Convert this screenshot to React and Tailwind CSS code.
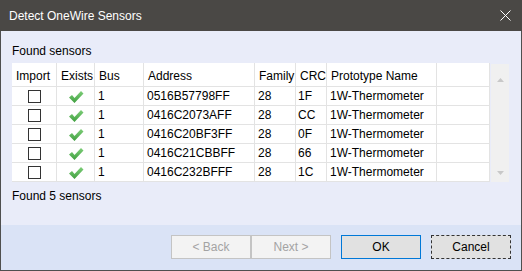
import React from "react";

const columns = ["Import", "Exists", "Bus", "Address", "Family", "CRC", "Prototype Name", ""];

const sensors = [
  { address: "0516B57798FF", family: "28", crc: "1F" },
  { address: "0416C2073AFF", family: "28", crc: "CC" },
  { address: "0416C20BF3FF", family: "28", crc: "0F" },
  { address: "0416C21CBBFF", family: "28", crc: "66" },
  { address: "0416C232BFFF", family: "28", crc: "1C" },
];

const Check = () => (
  <svg width="16" height="14" viewBox="0 0 16 14">
    <defs>
      <linearGradient id="chk" x1="0" y1="0" x2="0" y2="1">
        <stop offset="0" stopColor="#7fcf7a" />
        <stop offset="1" stopColor="#3f9f3f" />
      </linearGradient>
    </defs>
    <path d="M1 7.5 L4 5 L6.5 8 L13 1 L15.5 3.5 L6.5 13 Z" fill="url(#chk)" />
  </svg>
);

const Cell = ({ children, className = "" }) => (
  <div className={`border-r border-b border-[#e3e3e3] flex items-center overflow-hidden whitespace-nowrap ${className}`}>
    {children}
  </div>
);

export default function App() {
  return (
    <div
      className="w-[522px] h-[271px] flex flex-col text-[12px] text-black"
      style={{ fontFamily: '"Liberation Sans", Arial, sans-serif' }}
    >
      {/* Title bar */}
      <div className="h-[31px] bg-[#4a4845] flex items-center justify-between pl-[9px] pr-[11px] text-white">
        <span className="text-[12px]">Detect OneWire Sensors</span>
        <svg width="11" height="11" viewBox="0 0 11 11">
          <path d="M0.5 0.5 L10.5 10.5 M10.5 0.5 L0.5 10.5" stroke="#ffffff" strokeWidth="1" />
        </svg>
      </div>

      <div className="flex-1 flex flex-col border-x border-b border-[#4f4f4f]">
        {/* Content */}
        <div className="flex-1 bg-[#e9ecf9] pl-[11px] pr-[11px] pt-[12px]">
          <div className="h-[16px] leading-[16px]">Found sensors</div>
          <div className="mt-[4px] flex">
            <div className="grid grid-cols-[45px_38px_49px_111px_41px_31px_110px_53px] grid-rows-[24px_repeat(5,19px)] bg-white">
              {columns.map((c, i) => (
                <Cell key={i} className="pl-[4px] pt-[3px]">{c}</Cell>
              ))}
              {sensors.map((s, i) => (
                <React.Fragment key={i}>
                  <Cell className="justify-center">
                    <div className="w-[13px] h-[13px] border border-[#333333] bg-white" />
                  </Cell>
                  <Cell className="justify-center pt-[1px]">
                    <Check />
                  </Cell>
                  <Cell className="pl-[3px]">1</Cell>
                  <Cell className="pl-[3px]">{s.address}</Cell>
                  <Cell className="pl-[3px]">{s.family}</Cell>
                  <Cell className="pl-[2px]">{s.crc}</Cell>
                  <Cell className="pl-[3px]">1W-Thermometer</Cell>
                  <Cell />
                </React.Fragment>
              ))}
            </div>
            {/* Scrollbar */}
            <div className="ml-[1px] mt-[1px] w-[18px] bg-[#f0f0f0] flex flex-col items-center justify-between py-[14px] pb-[7px]">
              <svg width="7" height="4" viewBox="0 0 7 4">
                <path d="M0 4 L3.5 0 L7 4 Z" fill="#c8c8c8" />
              </svg>
              <svg width="7" height="4" viewBox="0 0 7 4">
                <path d="M0 0 L3.5 4 L7 0 Z" fill="#c8c8c8" />
              </svg>
            </div>
          </div>
          <div className="mt-[6px] h-[16px] leading-[16px]">Found 5 sensors</div>
        </div>

        {/* Buttons */}
        <div className="h-[45px] bg-[#dae3f6] flex justify-end items-start pt-[10px] pr-[10px]">
          <button className="w-[80px] h-[24px] bg-[#f3f3f3] border border-[#c4c4c4] text-[#a3a3a3]">
            &lt; Back
          </button>
          <button className="w-[80px] h-[24px] bg-[#f3f3f3] border border-[#c4c4c4] text-[#a3a3a3]">
            Next &gt;
          </button>
          <button className="ml-[10px] w-[80px] h-[24px] bg-[#e1e1e1] border border-[#0078d7]">
            OK
          </button>
          <button className="ml-[10px] w-[80px] h-[24px] bg-[#e1e1e1] border border-dashed border-[#333333]">
            Cancel
          </button>
        </div>
      </div>
    </div>
  );
}
